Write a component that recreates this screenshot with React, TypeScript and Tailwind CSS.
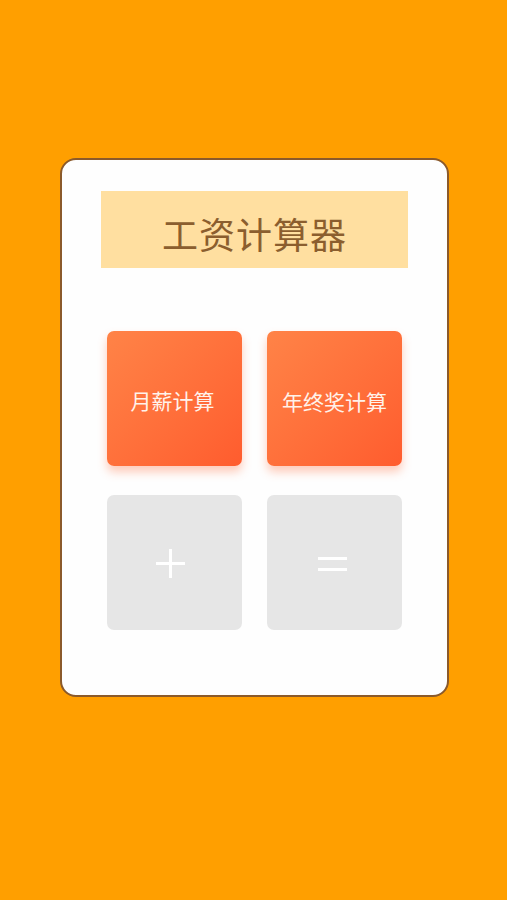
import React from "react";

const font = { fontFamily: '"Noto Sans CJK SC", "Noto Sans", sans-serif' };

export default function App() {
  return (
    <div className="w-[507px] h-[900px] bg-[#ff9f00] pt-[158px] pl-[60px]" style={font}>
      <div className="w-[389px] h-[539px] bg-[#fefefe] border-2 border-[#8b5a2b] rounded-[16px] pt-[31px] pl-[39px]">
        <div className="w-[307px] h-[77px] bg-[#ffdfa0] flex items-center justify-center pt-[6px]">
          <span className="text-[36px] text-[#8b5e2e] tracking-[1px]">工资计算器</span>
        </div>

        <div className="mt-[63px] ml-[6px] grid grid-cols-[135px_135px] gap-x-[25px] gap-y-[29px]">
          <button className="h-[135px] rounded-[7px] bg-gradient-to-br from-[#ff8347] to-[#ff5c2e] shadow-[0_6px_10px_rgba(255,110,60,0.35)] flex items-center justify-center text-[#fff2ea] text-[21px] pt-[4px] pr-[4px]">
            月薪计算
          </button>
          <button className="h-[135px] rounded-[7px] bg-gradient-to-br from-[#ff8347] to-[#ff5c2e] shadow-[0_6px_10px_rgba(255,110,60,0.35)] flex items-center justify-center text-[#fff2ea] text-[21px] pt-[6px]">
            年终奖计算
          </button>
          <button className="h-[135px] rounded-[7px] bg-[#e6e6e6] flex items-center justify-center pr-[9px] pt-[2px]">
            <svg width="29" height="29" viewBox="0 0 29 29">
              <path d="M14.5 0v29M0 14.5h29" stroke="white" strokeWidth="3" />
            </svg>
          </button>
          <button className="h-[135px] rounded-[7px] bg-[#e6e6e6] flex items-center justify-center pr-[4px] pt-[2px]">
            <svg width="29" height="16" viewBox="0 0 29 16">
              <path d="M0 2.5h29M0 13.5h29" stroke="white" strokeWidth="3" />
            </svg>
          </button>
        </div>
      </div>
    </div>
  );
}
